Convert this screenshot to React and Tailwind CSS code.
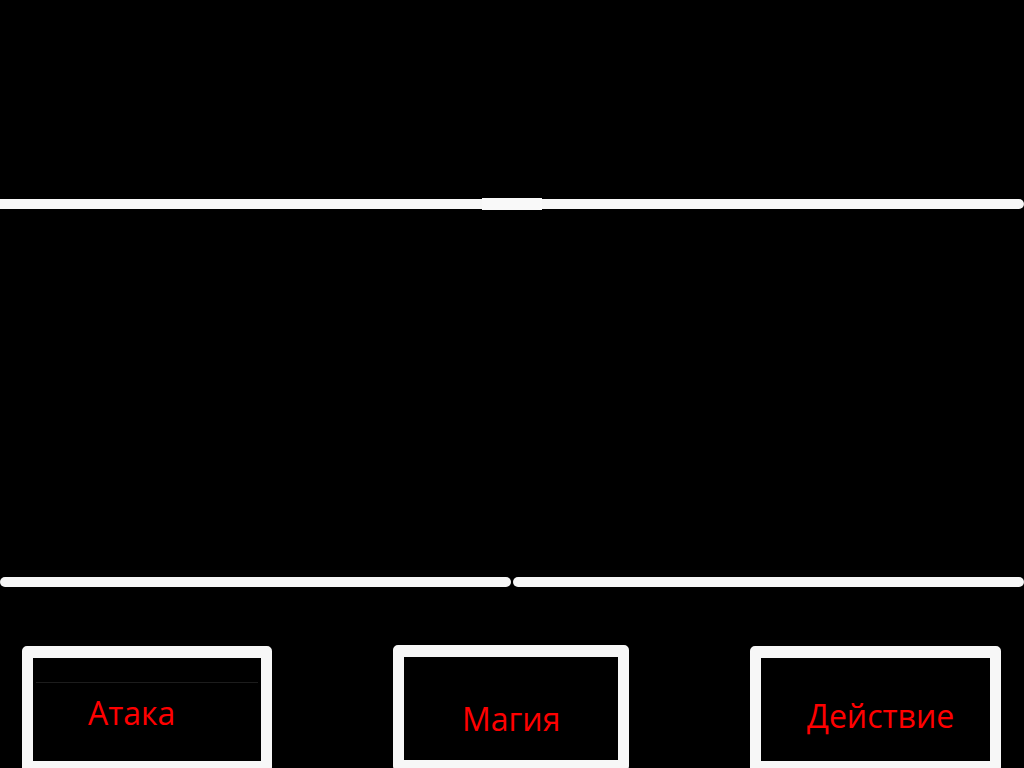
import React from "react";

// Кнопка меню боя: белая рамка, красная подпись
function ActionBox({ label, width, className = "", textClass = "", children }) {
  return (
    <div
      className={`shrink-0 h-[126px] border-x-[11px] border-t-[12px] border-b-[11px] border-[#f7f7f7] rounded-[5px] bg-black ${width} ${className}`}
    >
      {children}
      <p
        className={`text-[#ff0000] text-[32px] font-medium leading-[32px] whitespace-nowrap ${textClass}`}
        style={{ fontFamily: '"Open Sans", "Noto Sans", sans-serif' }}
      >
        {label}
      </p>
    </div>
  );
}

export default function App() {
  return (
    <div className="w-[1024px] h-[768px] bg-black overflow-hidden flex flex-col">
      {/* верхняя область */}
      <div className="h-[198px] shrink-0" />

      {/* верхняя линия */}
      <div className="flex items-center h-[12px] shrink-0">
        <div className="flex-1 h-[10px] bg-[#f7f7f7]" />
        <div className="w-[60px] h-[12px] bg-[#f9f9f9]" />
        <div className="flex-1 h-[10px] bg-[#f7f7f7] rounded-r-full" />
      </div>

      {/* средняя область */}
      <div className="h-[367px] shrink-0" />

      {/* нижние линии */}
      <div className="flex gap-[2px] h-[10px] shrink-0">
        <div className="flex-1 bg-[#f7f7f7] rounded-full" />
        <div className="flex-1 bg-[#f7f7f7] rounded-full" />
      </div>

      {/* кнопки */}
      <div className="flex items-start pt-[58px] pl-[22px]">
        <ActionBox label="Атака" width="w-[250px]" className="mt-[1px]" textClass="pl-[55px] pt-[14px]">
          <div className="mt-[24px] mx-[3px] h-px bg-[#1c1c1c]" />
        </ActionBox>
        <ActionBox label="Магия" width="w-[236px]" className="ml-[121px]" textClass="pl-[58px] pt-[46px]" />
        <ActionBox label="Действие" width="w-[251px]" className="ml-[121px] mt-[1px]" textClass="pl-[46px] pt-[42px]" />
      </div>
    </div>
  );
}
